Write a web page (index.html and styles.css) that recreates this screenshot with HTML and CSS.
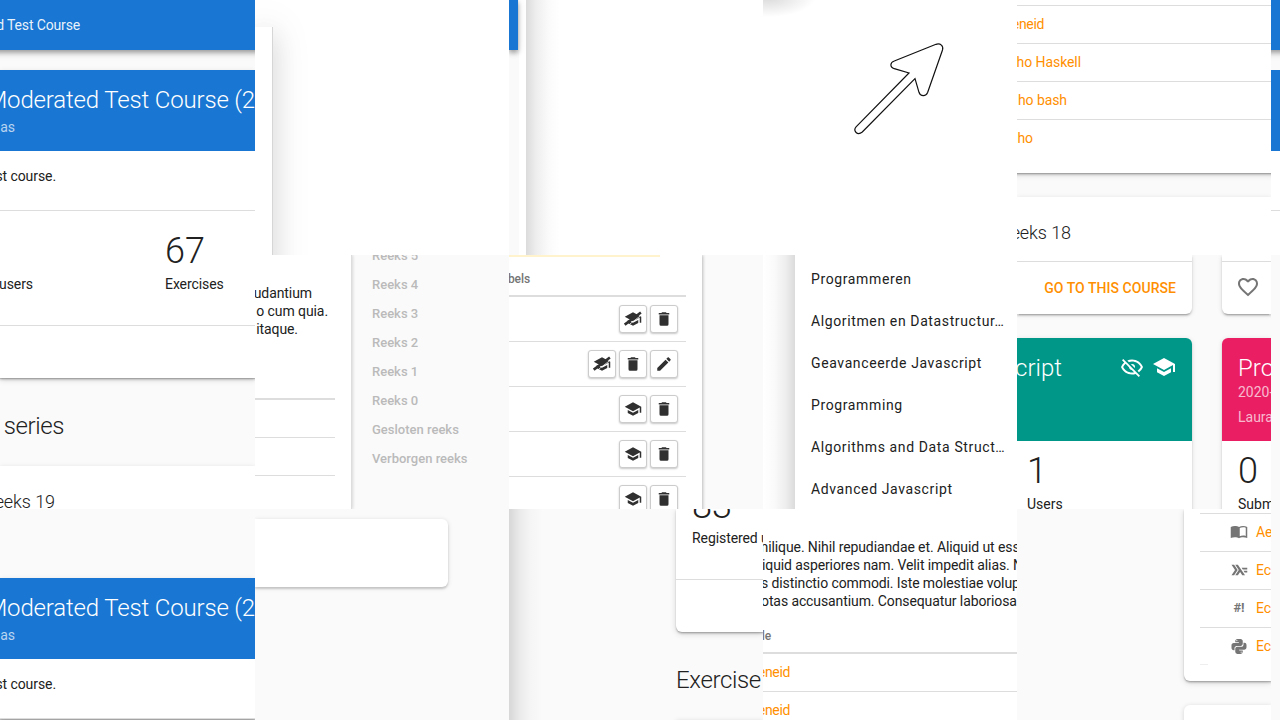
FILE: index.html
```html
<!DOCTYPE html>
<html lang="en">
<head>
<meta charset="utf-8">
<title>Courses</title>
<link rel="stylesheet" href="styles.css">
</head>
<body>
<svg class="defs" width="0" height="0">
  <symbol id="school" viewBox="0 0 24 24"><path d="M12,3L1,9L12,15L21,10.09V17H23V9M5,13.18V17.18L12,21L19,17.18V13.18L12,17L5,13.18Z"/></symbol>
  <symbol id="school-off" viewBox="0 0 24 24"><path d="M12,3L1,9L12,15L21,10.09V17H23V9M5,13.18V17.18L12,21L19,17.18V13.18L12,17L5,13.18Z"/><path class="gap" d="M8 18.500L22 7.700"/><path class="slash" d="M1 19.500L22.500 3.300"/></symbol>
  <symbol id="trash" viewBox="0 0 24 24"><path d="M19,4H15.5L14.5,3H9.5L8.5,4H5V6H19M6,19A2,2 0 0,0 8,21H16A2,2 0 0,0 18,19V7H6V19Z"/></symbol>
  <symbol id="pencil" viewBox="0 0 24 24"><path d="M20.71,7.04C21.1,6.65 21.1,6 20.71,5.63L18.37,3.29C18,2.9 17.35,2.9 16.96,3.29L15.12,5.12L18.87,8.87M3,17.25V21H6.75L17.81,9.93L14.06,6.18L3,17.25Z"/></symbol>
  <symbol id="heart" viewBox="0 0 24 24"><path d="M12.1,18.55L12,18.65L11.89,18.55C7.14,14.24 4,11.39 4,8.5C4,6.5 5.5,5 7.5,5C9.04,5 10.54,6 11.07,7.36H12.93C13.46,6 14.96,5 16.5,5C18.5,5 20,6.5 20,8.5C20,11.39 16.86,14.24 12.1,18.55M16.5,3C14.76,3 13.09,3.81 12,5.08C10.91,3.81 9.24,3 7.5,3C4.42,3 2,5.41 2,8.5C2,12.27 5.4,15.36 10.55,20.03L12,21.35L13.45,20.03C18.6,15.36 22,12.27 22,8.5C22,5.41 19.58,3 16.5,3Z"/></symbol>
  <symbol id="eye-off" viewBox="0 0 24 24"><path d="M2,5.27L3.28,4L20,20.72L18.73,22L15.65,18.92C14.5,19.3 13.28,19.5 12,19.5C7,19.5 2.73,16.39 1,12C1.69,10.24 2.79,8.69 4.19,7.46L2,5.27M12,9A3,3 0 0,1 15,12C15,12.35 14.94,12.69 14.83,13L11,9.17C11.31,9.06 11.65,9 12,9M12,4.5C17,4.5 21.27,7.61 23,12C22.18,14.08 20.79,15.88 19,17.19L17.58,15.76C18.94,14.82 20.06,13.54 20.82,12C19.17,8.64 15.76,6.5 12,6.5C10.91,6.5 9.84,6.68 8.84,7L7.3,5.47C8.74,4.85 10.33,4.5 12,4.5M3.18,12C4.83,15.36 8.24,17.5 12,17.5C12.69,17.5 13.37,17.43 14,17.29L11.72,15C10.29,14.85 9.15,13.71 9,12.28L5.6,8.87C4.61,9.72 3.78,10.78 3.18,12Z"/></symbol>
  <symbol id="book" viewBox="0 0 24 24"><path fill-rule="evenodd" d="M12 5.2C10.5 4.3 8.6 4 6.6 4C4.600 4 2.600 4.300 1 5.200V20C2.600 19.300 4.600 18.900 6.600 18.900C8.600 18.900 10.500 19.200 12 20.200C13.500 19.200 15.400 18.900 17.400 18.900C19.400 18.900 21.400 19.300 23 20V5.200C21.400 4.300 19.400 4 17.400 4C15.400 4 13.500 4.300 12 5.200M21 17.200C19.900 16.900 18.700 16.800 17.500 16.800C15.800 16.800 14.200 17.200 13 17.800V6.700C14.200 6.100 15.800 5.700 17.500 5.700C18.700 5.700 19.900 5.900 21 6.300Z"/></symbol>
  <symbol id="haskell" viewBox="0 0 24 24"><path d="M2 5H5.500L10.200 12L5.500 19H2L6.700 12ZM7 5H10.500L20 19H16.400L13.500 14.600L10.500 19H7L11.700 12ZM15.500 9H23V11.300H17ZM18 13H23V15.300H19.500Z"/></symbol>
  <symbol id="python" viewBox="0 0 24 24"><path d="M19.14,7.5A2.86,2.86 0 0,1 22,10.36V14.14A2.86,2.86 0 0,1 19.14,17H12C12,17.39 12.32,17.96 12.71,17.96H17V19.64A2.86,2.86 0 0,1 14.14,22.5H9.86A2.86,2.86 0 0,1 7,19.64V15.89C7,14.31 8.28,13.04 9.86,13.04H15.11C16.69,13.04 17.96,11.76 17.96,10.18V7.5H19.14M14.86,19.29C14.46,19.29 14.14,19.59 14.14,20.18C14.14,20.77 14.46,20.89 14.86,20.89A0.71,0.71 0 0,0 15.57,20.18C15.57,19.59 15.25,19.29 14.86,19.29M4.86,17.5C3.28,17.5 2,16.22 2,14.64V10.86C2,9.28 3.28,8 4.86,8H12C12,7.61 11.68,7.04 11.29,7.04H7V5.36C7,3.78 8.28,2.5 9.86,2.5H14.14C15.72,2.5 17,3.78 17,5.36V9.11C17,10.69 15.72,11.96 14.14,11.96H8.89C7.31,11.96 6.04,13.24 6.04,14.82V17.5H4.86M9.14,5.71C9.54,5.71 9.86,5.41 9.86,4.82C9.86,4.23 9.54,4.11 9.14,4.11C8.75,4.11 8.43,4.23 8.43,4.82C8.43,5.41 8.75,5.71 9.14,5.71Z"/></symbol>
</svg>
<main class="board">
  <section class="tile course">
    <header class="topbar"><span class="cut w80">d Test Course</span></header>
    <article class="sheet">
      <div class="hero"><h1 class="cut w255">Moderated Test Course (2</h1><p class="cut w15">as</p></div>
      <p class="intro"><span class="cut w56">st course.</span></p>
      <div class="stats"><span class="cut w33 statlabel">users</span><div class="stat"><b>67</b><span>Exercises</span></div></div>
      <div class="foot"></div>
    </article>
    <h2 class="section"><span class="cut w64">series</span></h2>
    <div class="sheet next"><span class="cut w55">eeks 19</span></div>
  </section>

  <section class="tile modal"><div class="modalbox"></div></section>

  <section class="tile edge"><div class="edgepage"><i class="edgebar"></i></div><div class="edgegap"></div><div class="fade"></div></section>

  <section class="tile pointer">
    <svg class="arrow" width="100" height="110" viewBox="0 0 100 110"><path d="M4.300 93.700L57 40L42.300 35.700C37.500 34 38 29.500 42.300 28L84 11.300C88.500 10 91.700 13 90.500 17L75.700 59.300C74 63.800 68.500 63.800 67 59.300L63 45.700L10.300 99C5.500 103 0.500 98 4.300 93.700Z"/></svg>
  </section>

  <section class="tile list">
    <div class="sheet links">
      <a><span class="cut w27 tight">eneid</span></a><a><span class="cut w64">ho Haskell</span></a><a><span class="cut w50">ho bash</span></a><a><span class="cut w16">ho</span></a>
    </div>
    <div class="sheet reeks"><span class="cut w54">eeks 18</span></div>
  </section>

  <section class="tile sliver"><div class="topbar"></div><div class="block"></div><div class="rest"></div></section>

  <section class="tile split">
    <div class="textcol">
      <p><span class="cut w57">udantium</span><span class="cut w73">o cum quia.</span><span class="cut w44">itaque.</span></p>
      <div class="lines"><i></i><i></i><i></i></div>
    </div>
    <nav class="toc"><a>Reeks 5</a><a>Reeks 4</a><a>Reeks 3</a><a>Reeks 2</a><a>Reeks 1</a><a>Reeks 0</a><a>Gesloten reeks</a><a>Verborgen reeks</a></nav>
  </section>

  <section class="tile labels">
    <div class="labelcard">
      <div class="warn"></div>
      <div class="th"><span class="cut w21">bels</span></div>
      <div class="tr"><button><svg><use href="#school-off"/></svg></button><button><svg><use href="#trash"/></svg></button></div>
      <div class="tr"><button><svg><use href="#school-off"/></svg></button><button><svg><use href="#trash"/></svg></button><button><svg><use href="#pencil"/></svg></button></div>
      <div class="tr"><button><svg><use href="#school"/></svg></button><button><svg><use href="#trash"/></svg></button></div>
      <div class="tr"><button><svg><use href="#school"/></svg></button><button><svg><use href="#trash"/></svg></button></div>
      <div class="tr"><button><svg><use href="#school"/></svg></button><button><svg><use href="#trash"/></svg></button></div>
    </div>
  </section>

  <section class="tile menu">
    <div class="menufade"></div>
    <nav class="drawer"><a>Programmeren</a><a>Algoritmen en Datastructur…</a><a>Geavanceerde Javascript</a><a>Programming</a><a>Algorithms and Data Struct…</a><a>Advanced Javascript</a></nav>
  </section>

  <section class="tile cards">
    <div class="card action"><span>GO TO THIS COURSE</span></div>
    <div class="card like"><svg width="24" height="24"><use href="#heart"/></svg></div>
    <div class="card teal"><div class="cardhead"><h3><span class="cut w45">cript</span></h3><svg width="24" height="24"><use href="#eye-off"/></svg><svg width="24" height="24"><use href="#school"/></svg></div><div class="cardstat"><b>1</b><span>Users</span></div></div>
    <div class="card pink"><div class="cardhead"><h3>Pro</h3><p>2020-</p><p>Laura</p></div><div class="cardstat"><b>0</b><span>Subm</span></div></div>
  </section>

  <div class="tile blank"></div>

  <section class="tile again">
    <div class="sheet">
      <div class="hero"><h1 class="cut w255">Moderated Test Course (2</h1><p class="cut w15">as</p></div>
      <p class="intro"><span class="cut w56">st course.</span></p>
    </div>
  </section>

  <section class="tile emptycard"><div></div></section>

  <section class="tile registered">
    <div class="fade"></div>
    <div class="regcol">
      <div class="regcard"><div class="regstat"><b>83</b><span>Registered u</span></div></div>
      <h2>Exercise</h2>
      <div class="regnext"></div>
    </div>
  </section>

  <section class="tile prose">
    <div class="lorem"><span class="pull">milique. Nihil repudiandae et. Aliquid ut ess</span><span class="shift">iquid asperiores nam. Velit impedit alias. N</span><span class="back">s distinctio commodi. Iste molestiae volup</span><span class="back">otas accusantium. Consequatur laboriosa</span></div>
    <div class="th2"><span class="cut w8">le</span></div>
    <div class="links"><a><span class="cut w27 tight">eneid</span></a><a><span class="cut w27 tight">eneid</span></a></div>
  </section>

  <section class="tile exercises">
    <div class="excard">
      <a><svg width="18" height="18"><use href="#book"/></svg><span>Ae</span></a>
      <a><svg width="18" height="18"><use href="#haskell"/></svg><span>Ec</span></a>
      <a><em>#!</em><span>Ec</span></a>
      <a><svg width="18" height="18"><use href="#python"/></svg><span>Ec</span></a>
    </div>
    <div class="exnext"></div>
  </section>

  <div class="tile blank"></div>
</main>
</body>
</html>
```
FILE: styles.css
```css
* { box-sizing: border-box; }
body { margin: 0; width: 1280px; height: 720px; overflow: hidden; font: 14px/18px Roboto, sans-serif; letter-spacing: -.08px; color: #212121; background: #fff; }
h1, h2, h3, p { margin: 0; font-weight: 300; }
.defs { position: absolute; }
svg { display: block; fill: currentColor; flex: none; }
.board { display: grid; grid-template-columns: 255px 254px 254px 254px 254px 9px; grid-template-rows: 255px 254px 211px; width: 1280px; height: 720px; }
.tile { overflow: hidden; min-width: 0; min-height: 0; white-space: nowrap; }
.cut { display: flex; justify-content: flex-end; }
.tight { letter-spacing: -.35px; }
.w8 { width: 8px; } .w15 { width: 15px; } .w16 { width: 16px; } .w21 { width: 21px; } .w27 { width: 27px; }
.w33 { width: 33px; } .w44 { width: 43px; } .w45 { width: 45px; } .w50 { width: 50px; } .w54 { width: 54px; }
.w55 { width: 55px; } .w56 { width: 56px; } .w57 { width: 57px; } .w64 { width: 64px; }
.w73 { width: 73px; } .w80 { width: 80px; } .w255 { width: 255px; }

.course { grid-row: span 2; background: #fafafa; }
.topbar { height: 50px; margin: 0 -12px; padding: 0 12px; background: #1976d2; color: rgba(255,255,255,.92); line-height: 50px; letter-spacing: -.15px; box-shadow: 0 2px 4px rgba(0,0,0,.2), 0 4px 5px rgba(0,0,0,.14), 0 1px 10px rgba(0,0,0,.12); }
.sheet { background: #fff; box-shadow: 0 2px 2px rgba(0,0,0,.14), 0 1px 1px rgba(0,0,0,.16), 0 2px 6px rgba(0,0,0,.14); }
.course .sheet { margin-top: 20px; }
.hero { height: 81px; padding-top: 16px; background: #1976d2; color: #fff; }
.hero h1 { font-size: 24px; line-height: 29px; letter-spacing: -.16px; }
.hero p { margin-top: 3px; line-height: 18px; color: rgba(255,255,255,.7); font-weight: 400; }
.intro { height: 60px; padding-top: 16px; border-bottom: 1px solid #ddd; font-weight: 400; }
.stats { display: flex; height: 115px; border-bottom: 1px solid #ddd; }
.statlabel { padding-top: 64px; }
.stat { display: flex; flex-direction: column; margin-left: 132px; padding-top: 19px; }
.stat b { font-size: 36px; line-height: 42px; font-weight: 300; height: 45px; }
.foot { height: 52px; }
.section { height: 88px; padding-top: 33px; font-size: 24px; line-height: 30px; letter-spacing: -.4px; }
.course .next { height: 60px; margin: 0; padding-top: 25px; font-size: 18px; line-height: 22px; font-weight: 300; box-shadow: 0 1px 5px rgba(0,0,0,.12); }

.modal { padding-top: 27px; background: #fff; }
.modalbox { width: 18px; height: 300px; background: #fff; border-right: 1px solid #d6d6d6; box-shadow: 0 0 38px rgba(0,0,0,.13), 0 9px 24px rgba(0,0,0,.11); }

.edge { display: flex; }
.edgepage { width: 10px; background: #fafafa; }
.edgebar { display: block; width: 9px; height: 50px; background: #1976d2; box-shadow: 0 2px 4px rgba(0,0,0,.2), 0 4px 5px rgba(0,0,0,.14), 0 1px 10px rgba(0,0,0,.12); }
.edgegap { width: 7px; }
.fade { width: 34px; background: linear-gradient(90deg, rgba(0,0,0,.14), rgba(0,0,0,.065) 30%, rgba(0,0,0,.02) 65%, transparent); }

.pointer { padding: 33px 0 0 89px; background: radial-gradient(ellipse 48px 20px at 5px -3px, rgba(0,0,0,.15), transparent); }
.arrow path { fill: none; stroke: #111; stroke-width: 1.2; }

.list { background: #fafafa; }
.sheet.links { height: 173px; margin: 0 -12px; padding: 5px 12px 0; }
.links a { display: block; height: 38px; padding-top: 9px; border-top: 1px solid #ddd; color: #ff8f00; }
.reeks { height: 70px; margin-top: 24px; padding-top: 25px; font-size: 18px; line-height: 22px; font-weight: 300; box-shadow: 0 1px 5px rgba(0,0,0,.12); }

.sliver { background: linear-gradient(#fafafa 200px, #fff 200px); }
.block { height: 81px; margin-top: 20px; background: #1976d2; }
.rest { height: 60px; background: #fff; border-bottom: 1px solid #ddd; }

.split { display: flex; background: #fafafa; }
.textcol { width: 97px; padding-top: 29px; background: #fff; border-right: 1px solid #ddd; box-shadow: 1px 0 3px rgba(0,0,0,.14); }
.textcol p { height: 114px; font-weight: 400; }
.lines { width: 80px; }
.lines i { display: block; height: 38px; border-top: 1px solid #ddd; }
.lines i:first-child { border-top-width: 2px; height: 39px; }
.toc { display: flex; flex-direction: column; padding-left: 20px; margin-top: -13px; letter-spacing: 0; }
.toc a { height: 29px; line-height: 27px; font-size: 13px; font-weight: 500; color: #bababa; }

.labels { background: #fafafa; }
.labelcard { width: 193px; height: 260px; background: #fff; box-shadow: 1px 0 3px rgba(0,0,0,.25); }
.warn { width: 151px; height: 2px; background: #fff3cd; }
.th { width: 177px; height: 40px; padding-top: 13px; border-bottom: 2px solid #ddd; font-size: 12px; font-weight: 500; color: #757575; }
.tr { display: flex; justify-content: flex-end; gap: 3px; width: 177px; height: 45px; padding: 8px 8px 0 0; border-bottom: 1px solid #ddd; }
button { display: grid; place-items: center; width: 28px; height: 28px; padding: 0; border: 1px solid #ccc; border-radius: 3px; background: #fff; color: #303030; box-shadow: 0 1px 2px rgba(0,0,0,.22); }
button svg { width: 18px; height: 18px; overflow: visible; }
.gap { stroke: #fff; stroke-width: 1; }
.slash { stroke: currentColor; stroke-width: 3.4; }

.menu { display: flex; background: #fff; }
.menufade { width: 32px; background: linear-gradient(270deg, rgba(0,0,0,.14), rgba(0,0,0,.065) 30%, rgba(0,0,0,.02) 65%, transparent); }
.drawer { display: flex; flex-direction: column; padding: 3px 0 0 16px; }
.drawer a { height: 42px; line-height: 42px; letter-spacing: .62px; }

.cards { display: grid; grid-template-columns: 175px 49px; grid-template-rows: 59px 180px; gap: 24px 30px; background: #fafafa; letter-spacing: 0; }
.card { background: #fff; box-shadow: 0 2px 2px rgba(0,0,0,.14), 0 3px 1px -2px rgba(0,0,0,.16), 0 1px 5px rgba(0,0,0,.12); }
.action { border-radius: 0 0 6px; padding: 6px 16px 0 0; background: linear-gradient(#ddd, #ddd) 0 6px / 100% 1px no-repeat #fff; }
.action span { display: flex; justify-content: flex-end; line-height: 54px; color: #ff8f00; font-weight: 500; letter-spacing: .05px; }
.like { border-radius: 0 0 0 6px; padding: 20px 0 0 14px; color: #757575; background: linear-gradient(#ddd, #ddd) 0 6px / 100% 1px no-repeat #fff; }
.teal { border-radius: 0 6px 0 0; }
.pink { border-radius: 6px 0 0; }
.cardhead { height: 103px; color: #fff; border-radius: inherit; }
.teal .cardhead { display: flex; align-items: flex-start; gap: 8px; padding: 17px 16px 0 0; background: #009688; }
.cardhead h3 { font-size: 24px; line-height: 26px; }
.teal h3 { flex: 1; }
.pink .cardhead { padding: 17px 0 0 16px; background: #e91e63; }
.pink .cardhead p { height: 25px; line-height: 22px; color: rgba(255,255,255,.7); font-weight: 400; }
.cardstat { display: flex; flex-direction: column; padding: 9px 0 0 10px; }
.pink .cardstat { padding-left: 16px; }
.cardstat b { font-size: 36px; line-height: 42px; height: 45px; font-weight: 300; }

.blank { background: #fafafa; }
.again { padding-top: 69px; background: #fafafa; }

.emptycard { padding: 10px 61px 0 0; background: #fafafa; }
.emptycard div { height: 68px; border-radius: 0 6px 6px 0; background: #fff; box-shadow: 0 2px 2px rgba(0,0,0,.14), 0 1px 5px rgba(0,0,0,.14); }

.registered { display: flex; background: #fafafa; }
.regcol { width: 87px; margin-left: 133px; }
.regcard { height: 123px; border-radius: 0 0 0 6px; background: linear-gradient(#ddd, #ddd) 0 70px / 100% 1px no-repeat #fff; box-shadow: 0 2px 2px rgba(0,0,0,.14), 0 1px 1px rgba(0,0,0,.14), 0 2px 6px rgba(0,0,0,.14); }
.regstat { display: flex; flex-direction: column; padding-left: 16px; }
.regstat b { font-size: 36px; line-height: 42px; font-weight: 300; height: 44px; margin-top: -24px; }
.regcol h2 { height: 88px; padding-top: 33px; font-size: 24px; line-height: 30px; letter-spacing: -.35px; }
.regnext { height: 10px; background: #fff; box-shadow: 0 1px 5px rgba(0,0,0,.16); }

.prose { background: #fff; }
.lorem { display: flex; flex-direction: column; height: 118px; padding-top: 29px; letter-spacing: -.1px; }
.lorem .pull { margin-left: -7px; }
.lorem .shift { margin-left: -1px; }
.lorem .back { margin-left: -2px; }
.th2 { height: 27px; border-bottom: 2px solid #ddd; font-size: 12px; font-weight: 500; color: #757575; }
.prose .links a:first-child { border-top: 0; height: 37px; padding-top: 9px; }

.exercises { padding-left: 167px; background: #fafafa; }
.excard { height: 172px; padding: 4px 0 0 16px; border-radius: 0 0 0 6px; background: linear-gradient(#eee, #eee) 16px 155px / 8px 1px no-repeat #fff; box-shadow: 0 2px 2px rgba(0,0,0,.14), 0 1px 1px rgba(0,0,0,.14), 0 2px 6px rgba(0,0,0,.14); }
.excard a { display: flex; align-items: center; gap: 8px; height: 38px; padding: 0 0 2px 30px; border-top: 1px solid #ddd; color: #ff8f00; }
.excard svg, .excard em { color: #757575; width: 18px; }
.excard em { font: 700 13px/18px Roboto, sans-serif; text-align: center; }
.exnext { height: 30px; margin-top: 24px; border-radius: 6px 0 0; background: #fff; box-shadow: 0 1px 5px rgba(0,0,0,.16); }
```
